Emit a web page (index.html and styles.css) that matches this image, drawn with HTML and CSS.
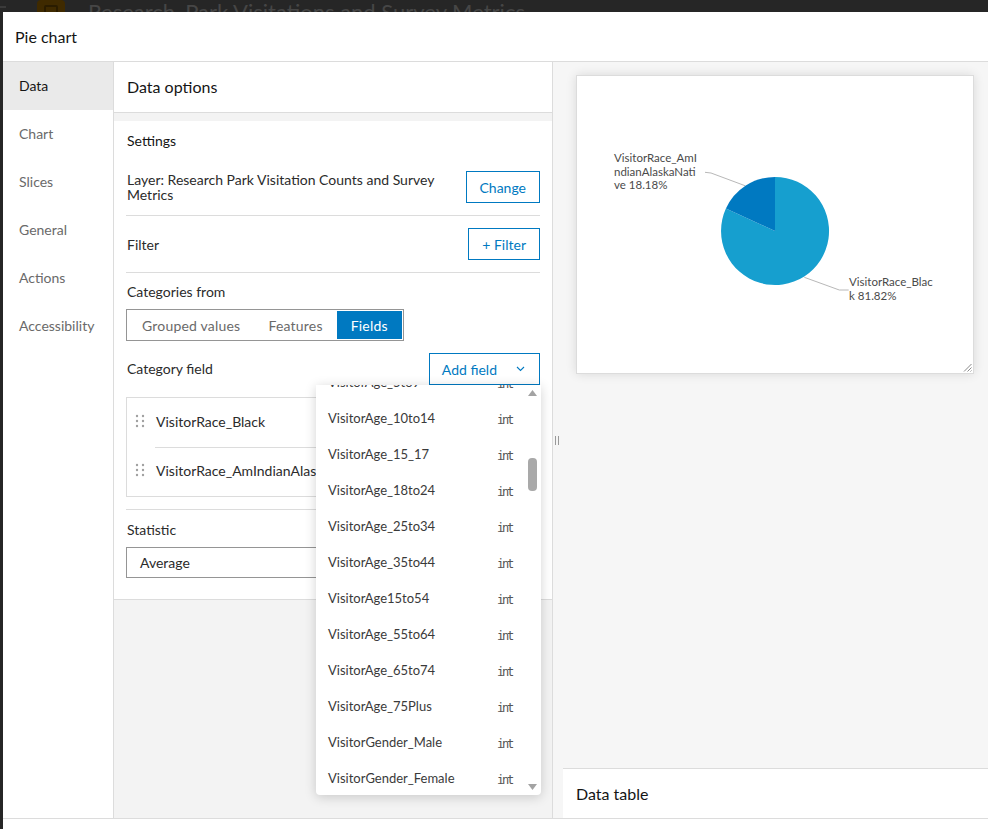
FILE: index.html
```html
<!DOCTYPE html>
<html lang="en">
<head>
<meta charset="utf-8">
<title>Pie chart</title>
<link rel="stylesheet" href="styles.css">
</head>
<body>
<div class="appbar">
  <span class="menu-ic"></span>
  <span class="app-ic"><span class="app-ic-inner"></span></span>
  <span class="app-title">Research_Park Visitations and Survey Metrics</span>
</div>
<div class="modal">
  <header class="modal-head">Pie chart</header>
  <div class="modal-body">
    <nav class="side">
      <div class="side-item active">Data</div>
      <div class="side-item">Chart</div>
      <div class="side-item">Slices</div>
      <div class="side-item">General</div>
      <div class="side-item">Actions</div>
      <div class="side-item">Accessibility</div>
    </nav>
    <section class="config">
      <div class="config-head">Data options</div>
      <div class="card">
        <div class="card-title">Settings</div>
        <div class="row">
          <div class="row-text">Layer: Research Park Visitation Counts and Survey Metrics</div>
          <button class="btn">Change</button>
        </div>
        <div class="row">
          <div class="row-text">Filter</div>
          <button class="btn">+ Filter</button>
        </div>
        <div class="block">
          <div class="label">Categories from</div>
          <div class="seg">
            <span class="seg-item">Grouped values</span>
            <span class="seg-item">Features</span>
            <span class="seg-item selected">Fields</span>
          </div>
          <div class="cat-row">
            <div class="label">Category field</div>
            <button class="btn btn-drop">Add field
              <svg class="chev" width="9" height="6" viewBox="0 0 9 6"><polyline points="1,1 4.5,4.5 8,1" fill="none" stroke="#0079c1" stroke-width="1.1"/></svg>
            </button>
            <div class="dropdown">
              <div class="dd-list">
                <div class="dd-items">
                  <div class="dd-item"><span>VisitorAge_5to9</span><span class="dd-type">int</span></div>
                  <div class="dd-item"><span>VisitorAge_10to14</span><span class="dd-type">int</span></div>
                  <div class="dd-item"><span>VisitorAge_15_17</span><span class="dd-type">int</span></div>
                  <div class="dd-item"><span>VisitorAge_18to24</span><span class="dd-type">int</span></div>
                  <div class="dd-item"><span>VisitorAge_25to34</span><span class="dd-type">int</span></div>
                  <div class="dd-item"><span>VisitorAge_35to44</span><span class="dd-type">int</span></div>
                  <div class="dd-item"><span>VisitorAge15to54</span><span class="dd-type">int</span></div>
                  <div class="dd-item"><span>VisitorAge_55to64</span><span class="dd-type">int</span></div>
                  <div class="dd-item"><span>VisitorAge_65to74</span><span class="dd-type">int</span></div>
                  <div class="dd-item"><span>VisitorAge_75Plus</span><span class="dd-type">int</span></div>
                  <div class="dd-item"><span>VisitorGender_Male</span><span class="dd-type">int</span></div>
                  <div class="dd-item"><span>VisitorGender_Female</span><span class="dd-type">int</span></div>
                </div>
              </div>
              <div class="dd-scroll">
                <svg class="sb-arrow" width="9" height="6" viewBox="0 0 9 6"><polygon points="0,6 4.5,0 9,6" fill="#a3a3a3"/></svg>
                <div class="sb-track"><div class="sb-thumb"></div></div>
                <svg class="sb-arrow" width="9" height="6" viewBox="0 0 9 6"><polygon points="0,0 9,0 4.5,6" fill="#a3a3a3"/></svg>
              </div>
            </div>
          </div>
          <div class="field-list">
            <div class="field-item">
              <svg class="grip" width="10" height="14" viewBox="0 0 10 14"><g fill="#a0a0a0"><circle cx="2" cy="2" r="1.2"/><circle cx="8" cy="2" r="1.2"/><circle cx="2" cy="7" r="1.2"/><circle cx="8" cy="7" r="1.2"/><circle cx="2" cy="12" r="1.2"/><circle cx="8" cy="12" r="1.2"/></g></svg>
              <span class="field-name">VisitorRace_Black</span>
            </div>
            <div class="field-item">
              <svg class="grip" width="10" height="14" viewBox="0 0 10 14"><g fill="#a0a0a0"><circle cx="2" cy="2" r="1.2"/><circle cx="8" cy="2" r="1.2"/><circle cx="2" cy="7" r="1.2"/><circle cx="8" cy="7" r="1.2"/><circle cx="2" cy="12" r="1.2"/><circle cx="8" cy="12" r="1.2"/></g></svg>
              <span class="field-name">VisitorRace_AmIndianAlaskaNative</span>
            </div>
          </div>
        </div>
        <div class="block last">
          <div class="label">Statistic</div>
          <div class="select">Average</div>
        </div>
      </div>
    </section>
    <div class="splitter"><span class="split-grip"></span></div>
    <section class="preview">
      <div class="chart-area">
        <div class="chart-card">
          <svg class="pie" width="396" height="296" viewBox="0 0 396 296">
            <path d="M198,155 L198,101 A54,54 0 1,1 148.9,132.6 Z" fill="#169fcf"/>
            <path d="M198,155 L198,101 A54,54 0 0,0 148.9,132.6 Z" fill="#0079c1"/>
            <polyline points="128,96.3 134,97 168,109.7" fill="none" stroke="#b8b8b8" stroke-width="1"/>
            <polyline points="227.3,201.3 262.3,214 271.7,214" fill="none" stroke="#b8b8b8" stroke-width="1"/>
            <g class="pie-label">
              <text x="37" y="86">VisitorRace_AmI</text>
              <text x="37" y="99.5">ndianAlaskaNati</text>
              <text x="37" y="113">ve 18.18%</text>
              <text x="272" y="210">VisitorRace_Blac</text>
              <text x="272" y="224">k 81.82%</text>
            </g>
          </svg>
          <svg class="resize" width="9" height="9" viewBox="0 0 9 9"><g stroke="#8a8a8a" stroke-width="1"><line x1="8.5" y1="1" x2="1" y2="8.5"/><line x1="8.5" y1="4.5" x2="4.5" y2="8.5"/><line x1="8.5" y1="7.5" x2="7.5" y2="8.5"/></g></svg>
        </div>
      </div>
      <div class="data-table">Data table</div>
    </section>
  </div>
  <div class="modal-foot"></div>
</div>
</body>
</html>
```
FILE: styles.css
```css
* { box-sizing: border-box; }
html, body { margin: 0; padding: 0; }
body {
  background: #262626;
  font-family: "Lato", "Noto Sans", sans-serif;
  color: #151515;
  height: 829px;
  overflow: hidden;
}
button { font-family: inherit; }

.appbar {
  height: 12px;
  overflow: hidden;
  display: flex;
  align-items: flex-start;
}
.menu-ic {
  width: 6px;
  height: 2px;
  margin-top: 6px;
  background: #3a3a3a;
}
.app-ic {
  width: 28px;
  height: 26px;
  margin-left: 31px;
  border-radius: 4px;
  background: #3f2a00;
  display: flex;
  justify-content: center;
  padding-top: 5px;
}
.app-ic-inner {
  width: 14px;
  height: 12px;
  border: 2px solid #2a1c00;
  border-radius: 2px;
}
.app-title {
  margin-left: 23px;
  font-size: 22px;
  line-height: 26px;
  margin-top: -1px;
  color: #464646;
  white-space: nowrap;
}

.modal {
  margin-left: 3px;
  height: 817px;
  background: #fff;
  display: flex;
  flex-direction: column;
}
.modal-head {
  height: 50px;
  flex: none;
  border-bottom: 1px solid #dcdcdc;
  padding-left: 12px;
  padding-bottom: 1px;
  font-size: 16px;
  display: flex;
  align-items: center;
  color: #151515;
}
.modal-body {
  flex: 1;
  display: flex;
  min-height: 0;
  border-bottom: 1px solid #dcdcdc;
}
.modal-foot { height: 10px; flex: none; }

.side {
  width: 111px;
  flex: none;
  border-right: 1px solid #dcdcdc;
}
.side-item {
  height: 48px;
  display: flex;
  align-items: center;
  padding-left: 16px;
  padding-bottom: 1px;
  font-size: 14px;
  color: #6a6a6a;
}
.side-item.active {
  background: #eaeaea;
  color: #151515;
}

.config {
  width: 439px;
  flex: none;
  background: #f3f3f3;
  border-right: 1px solid #dcdcdc;
}
.config-head {
  height: 51px;
  background: #fff;
  border-bottom: 1px solid #dcdcdc;
  display: flex;
  align-items: center;
  padding-left: 13px;
  padding-bottom: 1px;
  font-size: 16px;
}
.card {
  margin-top: 8px;
  background: #fff;
  border-bottom: 1px solid #dcdcdc;
  padding: 10px 12px 21px;
}
.card-title {
  font-size: 14px;
  line-height: 20px;
  margin-bottom: 8px;
  padding-left: 1px;
}
.row {
  display: flex;
  align-items: center;
  justify-content: space-between;
  padding: 12px 0 12px;
  border-bottom: 1px solid #dcdcdc;
}
.row-text {
  font-size: 14px;
  line-height: 15px;
  padding-left: 1px;
  max-width: 325px;
  color: #2b2b2b;
}
.btn {
  height: 32px;
  border: 1px solid #0079c1;
  background: #fff;
  color: #0079c1;
  font-size: 14px;
  padding: 0 13px;
  display: flex;
  align-items: center;
}
.block {
  padding: 9px 0 12px;
  border-bottom: 1px solid #dcdcdc;
}
.block.last { border-bottom: none; padding: 10px 0 0; }
.label {
  font-size: 14px;
  line-height: 20px;
  padding-left: 1px;
  color: #2b2b2b;
}
.seg {
  margin-top: 7px;
  display: inline-flex;
  border: 1px solid #959595;
  padding: 1px;
  height: 32px;
}
.seg-item {
  display: flex;
  align-items: center;
  padding: 0 14px;
  font-size: 14px;
  letter-spacing: 0.2px;
  color: #6a6a6a;
}
.seg-item.selected {
  background: #0079c1;
  color: #fff;
  padding: 0 14px;
}
.cat-row {
  margin-top: 12px;
  display: flex;
  align-items: center;
  justify-content: space-between;
  position: relative;
  z-index: 2;
}
.btn-drop { padding: 0 14px 0 12px; }
.chev { margin-left: 19px; }

.dropdown {
  position: absolute;
  top: 100%;
  right: -1px;
  width: 225px;
  height: 410px;
  background: #fff;
  border-radius: 0 0 4px 4px;
  box-shadow: 0 2px 12px rgba(0,0,0,0.18);
  display: flex;
}
.dd-list {
  flex: 1;
  overflow: hidden;
}
.dd-items { margin-top: -21px; }
.dd-item {
  height: 36px;
  display: flex;
  align-items: center;
  justify-content: space-between;
  padding: 0 14px 0 12px;
  font-size: 13px;
  color: #3a3a3a;
}
.dd-type {
  font-family: "DejaVu Sans Mono", monospace;
  font-size: 12px;
  letter-spacing: -2.2px;
  color: #555;
  padding-top: 3px;
}
.dd-scroll {
  width: 15px;
  flex: none;
  display: flex;
  flex-direction: column;
  align-items: center;
  padding: 5px 3px 5px 0;
}
.sb-track {
  flex: 1;
  width: 9px;
  padding-top: 62px;
}
.sb-thumb {
  width: 9px;
  height: 33px;
  border-radius: 4px;
  background: #a9a9a9;
}

.field-list {
  margin-top: 12px;
  border: 1px solid #dcdcdc;
  padding-left: 8px;
}
.field-item {
  height: 49px;
  display: flex;
  align-items: center;
  padding-bottom: 3px;
  overflow: hidden;
  white-space: nowrap;
  position: relative;
}
.field-item + .field-item::before {
  content: "";
  position: absolute;
  top: 0;
  left: 20px;
  right: 0;
  border-top: 1px solid #dcdcdc;
}
.grip { flex: none; margin-right: 11px; }
.field-name {
  font-size: 14px;
  color: #2b2b2b;
}
.select {
  margin-top: 7px;
  height: 31px;
  border: 1px solid #959595;
  display: flex;
  align-items: center;
  padding-left: 13px;
  font-size: 14px;
  color: #2b2b2b;
}

.splitter {
  width: 10px;
  flex: none;
  background: #f6f6f6;
  display: flex;
  align-items: center;
  justify-content: center;
}
.split-grip {
  width: 4px;
  height: 9px;
  border-left: 1px solid #9a9a9a;
  border-right: 1px solid #9a9a9a;
  margin-right: 2px;
}
.preview {
  flex: 1;
  background: #f6f6f6;
  display: flex;
  flex-direction: column;
  min-width: 0;
}
.chart-area {
  flex: 1;
  padding: 13px 0 0 13px;
}
.chart-card {
  width: 398px;
  height: 299px;
  background: #fff;
  border: 1px solid #dcdcdc;
  box-shadow: 0 0 10px rgba(0,0,0,0.12);
  position: relative;
}
.pie { display: block; }
.pie-label text {
  font-family: "Lato", "Noto Sans", sans-serif;
  font-size: 11.5px;
  fill: #4a4a4a;
}
.resize {
  position: absolute;
  right: 1px;
  bottom: 1px;
}
.data-table {
  height: 50px;
  flex: none;
  background: #fff;
  border-top: 1px solid #dcdcdc;
  display: flex;
  align-items: center;
  padding-left: 13px;
  font-size: 16px;
  color: #151515;
}
```
